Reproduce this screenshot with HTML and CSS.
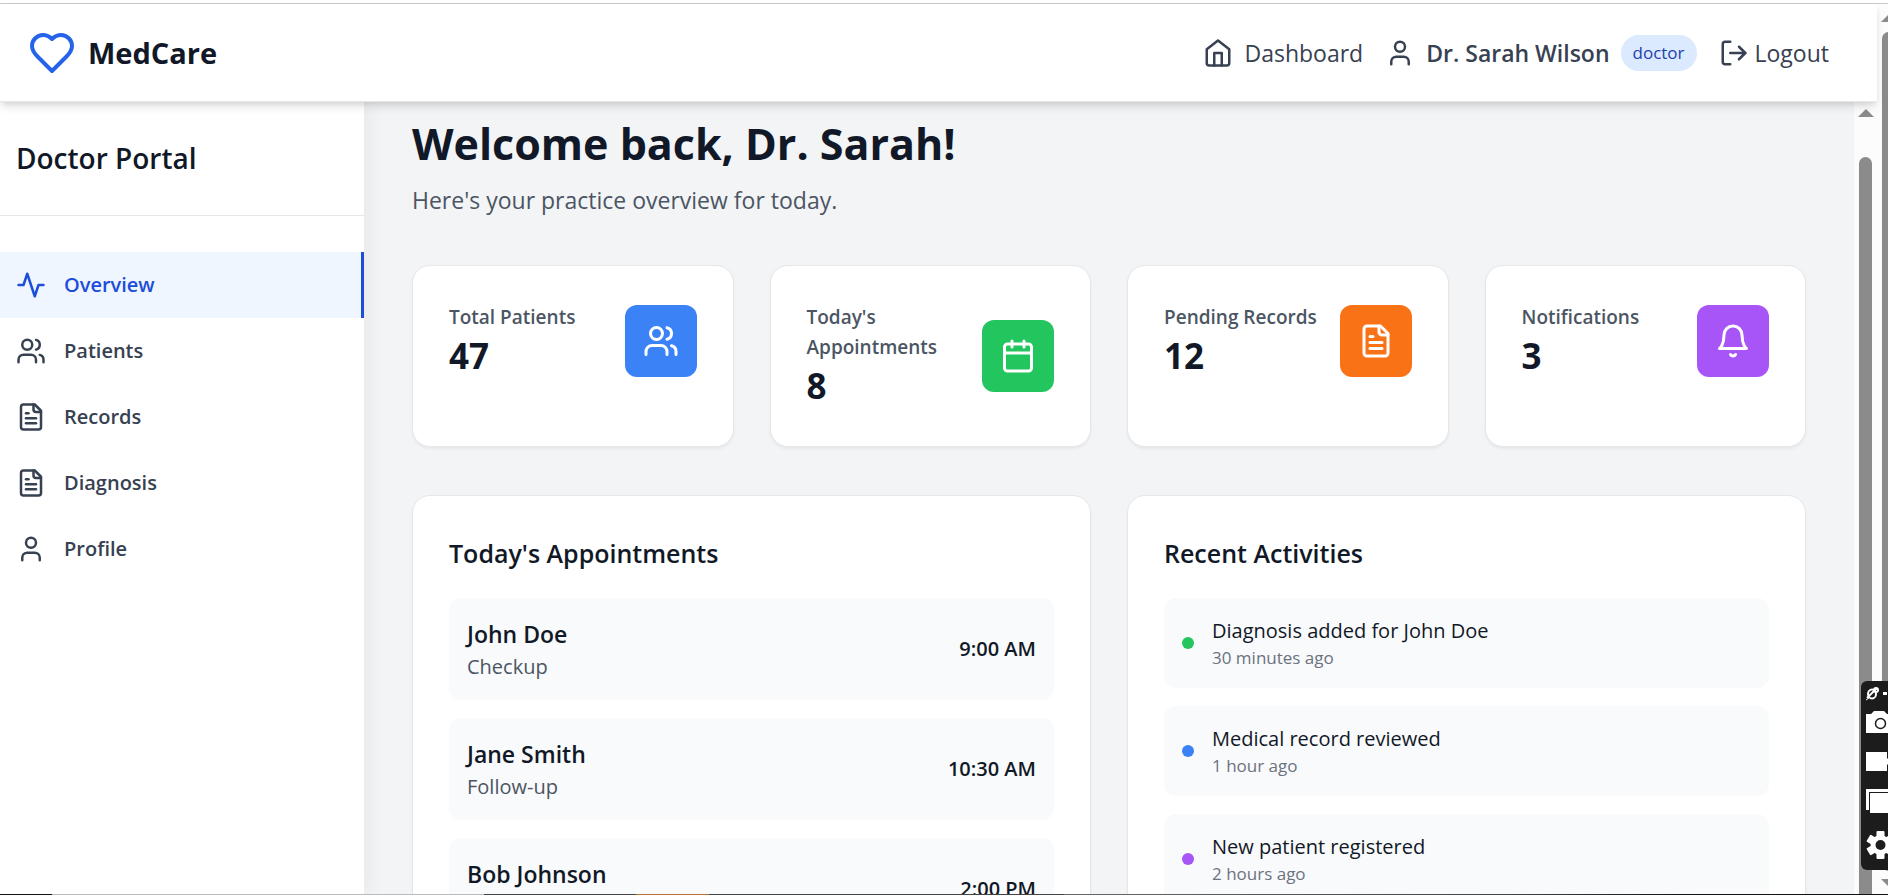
FILE: index.html
```html
<!DOCTYPE html>
<html lang="en">
<head>
<meta charset="utf-8">
<title>MedCare - Doctor Portal</title>
<link rel="stylesheet" href="styles.css">
</head>
<body>
<svg class="sprite" aria-hidden="true">
  <symbol id="heart" viewBox="0 0 24 24"><path d="M19 14c1.49-1.46 3-3.21 3-5.5A5.5 5.5 0 0 0 16.5 3c-1.76 0-3 .5-4.5 2-1.5-1.5-2.74-2-4.5-2A5.500 5.500 0 0 0 2 8.500c0 2.300 1.500 4.050 3 5.500l7 7Z"/></symbol>
  <symbol id="home" viewBox="0 0 24 24"><path d="m3 9 9-7 9 7v11a2 2 0 0 1-2 2H5a2 2 0 0 1-2-2z"/><path d="M9 22V12h6v10"/></symbol>
  <symbol id="user" viewBox="0 0 24 24"><path d="M19 21v-2a4 4 0 0 0-4-4H9a4 4 0 0 0-4 4v2"/><circle cx="12" cy="7" r="4"/></symbol>
  <symbol id="logout" viewBox="0 0 24 24"><path d="M9 21H5a2 2 0 0 1-2-2V5a2 2 0 0 1 2-2h4"/><path d="m16 17 5-5-5-5"/><path d="M21 12H9"/></symbol>
  <symbol id="activity" viewBox="0 0 24 24"><path d="M22 12h-4l-3 9L9 3l-3 9H2"/></symbol>
  <symbol id="users" viewBox="0 0 24 24"><path d="M16 21v-2a4 4 0 0 0-4-4H6a4 4 0 0 0-4 4v2"/><circle cx="9" cy="7" r="4"/><path d="M22 21v-2a4 4 0 0 0-3-3.870"/><path d="M16 3.130a4 4 0 0 1 0 7.750"/></symbol>
  <symbol id="file" viewBox="0 0 24 24"><path d="M15 2H6a2 2 0 0 0-2 2v16a2 2 0 0 0 2 2h12a2 2 0 0 0 2-2V7Z"/><path d="M14 2v4a2 2 0 0 0 2 2h4"/><path d="M10 9H8"/><path d="M16 13H8"/><path d="M16 17H8"/></symbol>
  <symbol id="calendar" viewBox="0 0 24 24"><path d="M8 2v4"/><path d="M16 2v4"/><rect width="18" height="18" x="3" y="4" rx="2"/><path d="M3 10h18"/></symbol>
  <symbol id="bell" viewBox="0 0 24 24"><path d="M6 8a6 6 0 0 1 12 0c0 7 3 9 3 9H3s3-2 3-9"/><path d="M10.300 21a1.940 1.940 0 0 0 3.400 0"/></symbol>
</svg>
<div class="window">
  <div class="page">
    <header class="topbar">
      <a class="brand" href="#"><svg class="icon icon-xl"><use href="#heart"/></svg><span>MedCare</span></a>
      <nav class="topnav" aria-label="Account">
        <a class="toplink" href="#"><svg class="icon"><use href="#home"/></svg><span>Dashboard</span></a>
        <div class="toplink"><svg class="icon"><use href="#user"/></svg><strong>Dr. Sarah Wilson</strong><span class="badge">doctor</span></div>
        <button class="toplink logout" type="button"><svg class="icon"><use href="#logout"/></svg><span>Logout</span></button>
      </nav>
    </header>
    <div class="body">
      <aside class="sidebar">
        <h2 class="portal">Doctor Portal</h2>
        <nav class="menu" aria-label="Portal">
          <button class="item active" type="button"><svg class="icon"><use href="#activity"/></svg>Overview</button>
          <button class="item" type="button"><svg class="icon"><use href="#users"/></svg>Patients</button>
          <button class="item" type="button"><svg class="icon"><use href="#file"/></svg>Records</button>
          <button class="item" type="button"><svg class="icon"><use href="#file"/></svg>Diagnosis</button>
          <button class="item" type="button"><svg class="icon"><use href="#user"/></svg>Profile</button>
        </nav>
      </aside>
      <main class="content">
        <h1 class="title">Welcome back, Dr. Sarah!</h1>
        <p class="subtitle">Here's your practice overview for today.</p>
        <section class="stats" aria-label="Statistics">
          <div class="card stat"><div><p class="label">Total Patients</p><p class="value">47</p></div><span class="tile blue"><svg class="icon icon-lg"><use href="#users"/></svg></span></div>
          <div class="card stat"><div><p class="label">Today's Appointments</p><p class="value">8</p></div><span class="tile green"><svg class="icon icon-lg"><use href="#calendar"/></svg></span></div>
          <div class="card stat"><div><p class="label">Pending Records</p><p class="value">12</p></div><span class="tile orange"><svg class="icon icon-lg"><use href="#file"/></svg></span></div>
          <div class="card stat"><div><p class="label">Notifications</p><p class="value">3</p></div><span class="tile purple"><svg class="icon icon-lg"><use href="#bell"/></svg></span></div>
        </section>
        <div class="panels">
          <section class="card">
            <h3 class="heading">Today's Appointments</h3>
            <ul class="list">
              <li class="row between"><div><p class="name">John Doe</p><p class="kind">Checkup</p></div><time class="time">9:00 AM</time></li>
              <li class="row between"><div><p class="name">Jane Smith</p><p class="kind">Follow-up</p></div><time class="time">10:30 AM</time></li>
              <li class="row between"><div><p class="name">Bob Johnson</p><p class="kind">Consultation</p></div><time class="time">2:00 PM</time></li>
            </ul>
          </section>
          <section class="card">
            <h3 class="heading">Recent Activities</h3>
            <ul class="list">
              <li class="row"><span class="dot green"></span><div><p class="event">Diagnosis added for John Doe</p><p class="ago">30 minutes ago</p></div></li>
              <li class="row"><span class="dot blue"></span><div><p class="event">Medical record reviewed</p><p class="ago">1 hour ago</p></div></li>
              <li class="row"><span class="dot purple"></span><div><p class="event">New patient registered</p><p class="ago">2 hours ago</p></div></li>
            </ul>
          </section>
        </div>
      </main>
      <div class="scroll inner" aria-hidden="true"><span class="arrow"></span><span class="thumb"></span></div>
    </div>
  </div>
  <div class="scroll outer" aria-hidden="true"><span class="arrow"></span><span class="thumb"></span><span class="arrow down"></span></div>
</div>
<div class="taskbar" aria-hidden="true"></div>
<div class="recorder">
  <svg class="tool" viewBox="0 0 27 20"><g fill="none" stroke="#fff" stroke-width="2"><path d="M6 15 16 5"/><ellipse cx="11" cy="11" rx="4" ry="4.500"/><circle cx="15" cy="7" r="2"/><path d="M5 17l3-2" stroke-width="1"/></g><path fill="#fff" d="M22 9h4v3h-4z"/></svg>
  <button type="button" aria-label="Screenshot"><svg viewBox="0 0 27 22"><path fill="#fff" d="M5 3h5l3-3h10l3 3h1v19H5z"/><circle cx="19.500" cy="12.500" r="5" fill="#fff" stroke="#1c1c1c" stroke-width="1.500"/></svg></button>
  <button type="button" aria-label="Record"><svg viewBox="0 0 27 22"><path fill="#fff" d="M5 2h21v19H5z"/><path fill="#fff" d="m25 10 2-2v7l-2-2z"/></svg></button>
  <button type="button" aria-label="Gallery"><svg viewBox="0 0 27 26"><path fill="#fff" d="M5 1h22v3H8v18H5z"/><path fill="#fff" d="M9 5h18v20H9z"/></svg></button>
  <button type="button" aria-label="Settings"><svg viewBox="0 0 27 30"><g fill="#fff" transform="translate(19.500 15)"><circle r="10"/><rect x="-4" y="-14" width="8" height="28" rx="1"/><rect x="-4" y="-14" width="8" height="28" rx="1" transform="rotate(60)"/><rect x="-4" y="-14" width="8" height="28" rx="1" transform="rotate(120)"/><circle r="5" fill="#1c1c1c"/></g></svg></button>
</div>
</body>
</html>
```
FILE: styles.css
```css
* { box-sizing: border-box; margin: 0; padding: 0; }
html, body { height: 100%; }
body {
  display: flex;
  flex-direction: column;
  overflow: hidden;
  position: relative;
  font-family: "Segoe UI", "Open Sans", "Noto Sans", sans-serif;
  font-size: 23px;
  line-height: 36px;
  color: #111827;
  background: #fff;
}
ul { list-style: none; }
a { color: inherit; text-decoration: none; }
button { font: inherit; color: inherit; background: none; border: 0; }
.sprite { position: absolute; width: 0; height: 0; }
.icon {
  width: 30px; height: 30px; flex: none;
  fill: none; stroke: currentColor; stroke-width: 2;
  stroke-linecap: round; stroke-linejoin: round;
}
.icon-lg { width: 36px; height: 36px; }
.icon-xl { width: 48px; height: 48px; color: #2563eb; }

.window { flex: 1; min-height: 0; display: flex; margin-top: 3px; border-top: 1px solid #c8c8c8; }
.page { flex: 1; min-width: 0; display: flex; flex-direction: column; }

.topbar {
  flex: none; height: 98px; padding: 0 48px 0 28px;
  display: flex; align-items: center; justify-content: space-between;
  background: #fff; border-bottom: 1px solid #e5e7eb;
  box-shadow: 0 6px 9px -1px rgba(0, 0, 0, .1), 0 3px 6px -2px rgba(0, 0, 0, .1);
  z-index: 1;
}
.brand { display: flex; align-items: center; gap: 12px; font-size: 29px; font-weight: 700; }
.topnav { display: flex; align-items: center; gap: 22px; color: #374151; }
.toplink { display: flex; align-items: center; gap: 11px; }
.toplink strong { font-weight: 600; }
.logout { gap: 6px; }
.badge {
  padding: 6px 12px; border-radius: 18px;
  font-size: 17px; line-height: 24px; color: #1e40af; background: #dbeafe;
}

.body { flex: 1; min-height: 0; display: flex; background: #f3f4f6; }
.sidebar { flex: none; width: 364px; background: #fff; box-shadow: 6px 0 18px rgba(0, 0, 0, .05); }
.portal {
  padding: 36px 16px; border-bottom: 1px solid #e5e7eb;
  font-size: 28px; line-height: 41px; font-weight: 600;
}
.menu { padding-top: 36px; }
.item {
  width: 100%; padding: 18px 16px; display: flex; align-items: center; gap: 18px;
  font-size: 20px; line-height: 30px; font-weight: 600; color: #374151; text-align: left;
}
.item.active { color: #1d4ed8; background: #eff6ff; border-right: 3px solid #1d4ed8; }

.content { flex: 1; min-width: 0; overflow: hidden; padding: 15px 48px 0; }
.title { font-size: 43px; line-height: 54px; font-weight: 700; }
.subtitle { margin: 11px 0 47px; color: #4b5563; }
.card {
  padding: 36px; background: #fff; border: 1px solid #e5e7eb; border-radius: 18px;
  box-shadow: 0 2px 3px rgba(0, 0, 0, .05);
}
.stats { display: grid; grid-template-columns: repeat(4, 1fr); gap: 36px; }
.stat { display: grid; grid-template-columns: 1fr auto; gap: 12px; align-items: center; align-content: start; }
.label { font-size: 19px; line-height: 30px; font-weight: 600; color: #4b5563; }
.value { font-size: 35px; line-height: 48px; font-weight: 700; }
.tile { width: 72px; height: 72px; display: grid; place-items: center; color: #fff; border-radius: 12px; }
.blue { background: #3b82f6; }
.green { background: #22c55e; }
.orange { background: #f97316; }
.purple { background: #a855f7; }

.panels { margin-top: 48px; display: grid; grid-template-columns: 1fr 1fr; gap: 36px; }
.heading { margin-bottom: 24px; font-size: 25px; line-height: 42px; font-weight: 600; }
.list { display: grid; gap: 18px; }
.row { padding: 18px; display: flex; align-items: center; gap: 18px; background: #f9fafb; border-radius: 12px; }
.between { justify-content: space-between; }
.name { font-weight: 600; }
.kind { font-size: 20px; line-height: 30px; color: #4b5563; }
.time { font-size: 20px; line-height: 30px; font-weight: 600; }
.dot { flex: none; width: 12px; height: 12px; border-radius: 50%; }
.event { font-size: 20px; line-height: 30px; }
.ago { font-size: 17px; line-height: 24px; color: #6b7280; }

.scroll { flex: none; display: flex; flex-direction: column; background: #fcfcfc; overflow: hidden; }
.arrow { flex: none; border: 8px solid transparent; border-top: 0; border-bottom-color: #8b8b8b; }
.arrow.down { border-top: 8px solid #8b8b8b; border-bottom: 0; }
.thumb { flex: 1; background: #8b8b8b; border-radius: 7px; }
.inner { width: 23px; padding: 7px 4px 0; align-items: center; }
.inner .thumb { width: 13px; margin-top: 40px; border-radius: 7px 7px 0 0; }
.outer { width: 11px; padding: 10px 0 7px 4px; }
.outer .arrow { align-self: flex-start; }
.outer .thumb { flex: 1; width: 13px; margin: 10px 0 8px 1px; }

.taskbar {
  flex: none; height: 1px;
  background: linear-gradient(to right, #111 0 52px, #bbb 52px 484px, #444 484px 636px, #b87333 636px 709px, #444 709px 1064px, #666 1064px 1084px, #444 80%, #111 90%);
}
.recorder {
  position: absolute; right: 0; bottom: 25px; z-index: 2;
  width: 27px; height: 189px; overflow: hidden;
  display: flex; flex-direction: column; justify-content: space-between;
  padding: 2px 0 10px; background: #1c1c1c; border-radius: 6px 0 0 6px;
}
.recorder svg { display: block; width: 27px; }
.recorder .tool { margin-bottom: -8px; }
```
